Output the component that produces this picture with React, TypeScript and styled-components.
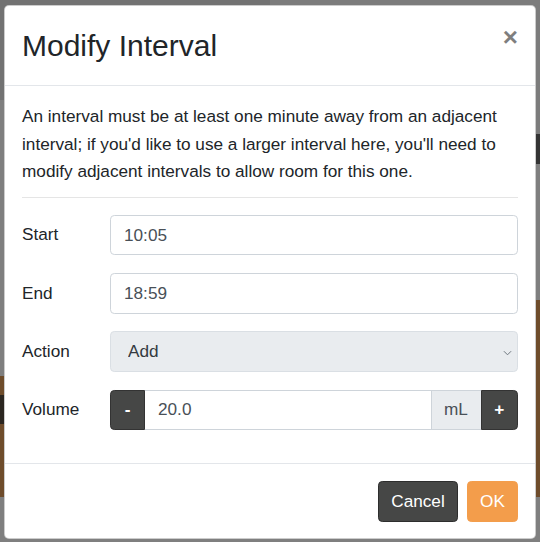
import styled, { createGlobalStyle } from "styled-components";

const GlobalStyle = createGlobalStyle`
  html, body {
    margin: 0;
    padding: 0;
  }
  body {
    min-height: 542px;
    font-family: "Liberation Sans", "Helvetica Neue", Arial, sans-serif;
    color: #212529;
    background:
      linear-gradient(
          to bottom,
          #727272 0 100px,
          #7f7f7f 100px 376px,
          #6e4c2b 376px 395px,
          #2b2620 395px 424px,
          #6e4c2b 424px 497px,
          #7f7f7f 497px
        )
        left top / 50% 100% no-repeat,
      linear-gradient(
          to bottom,
          #7c7c7c 0 134px,
          #343434 134px 164px,
          #7f7f7f 164px 300px,
          #6e4c2b 300px 497px,
          #7f7f7f 497px
        )
        right top / 50% 100% no-repeat;
  }
  * {
    box-sizing: border-box;
  }
`;

const rows = [
  { label: "Start", value: "10:05" },
  { label: "End", value: "18:59" },
];

export default function App() {
  return (
    <>
      <GlobalStyle />
      <Dialog role="dialog" aria-labelledby="modify-interval-title">
        <Header>
          <Title id="modify-interval-title">Modify Interval</Title>
          <CloseButton aria-label="Close">×</CloseButton>
        </Header>
        <Body>
          <Notice>
            An interval must be at least one minute away from an adjacent
            interval; if you'd like to use a larger interval here, you'll need
            to modify adjacent intervals to allow room for this one.
          </Notice>
          <Divider />
          <Form>
            {rows.map((row) => (
              <FormRow key={row.label}>
                <Label>{row.label}</Label>
                <TextInput defaultValue={row.value} />
              </FormRow>
            ))}
            <FormRow>
              <Label>Action</Label>
              <SelectWrap>
                <Select defaultValue="add">
                  <option value="add">Add</option>
                  <option value="remove">Remove</option>
                </Select>
                <Chevron viewBox="0 0 10 6" aria-hidden="true">
                  <path d="M1 1l4 4 4-4" />
                </Chevron>
              </SelectWrap>
            </FormRow>
            <FormRow>
              <Label>Volume</Label>
              <InputGroup>
                <StepButton $side="left">-</StepButton>
                <GroupInput defaultValue="20.0" />
                <Addon>mL</Addon>
                <StepButton $side="right">+</StepButton>
              </InputGroup>
            </FormRow>
          </Form>
        </Body>
        <Footer>
          <Button $variant="dark">Cancel</Button>
          <Button $variant="orange">OK</Button>
        </Footer>
      </Dialog>
    </>
  );
}

const Dialog = styled.div`
  margin: 5px 4px 0;
  background: #fff;
  border: 1px solid rgba(0, 0, 0, 0.2);
  border-radius: 5px;
  display: flex;
  flex-direction: column;
  overflow: hidden;
`;

const Header = styled.div`
  display: flex;
  align-items: flex-start;
  justify-content: space-between;
  padding: 17px 17px 17px;
  border-bottom: 1px solid #e3e6ea;
`;

const Title = styled.h3`
  margin: 0;
  font-size: 30px;
  font-weight: 400;
  line-height: 45px;
  color: #212529;
`;

const CloseButton = styled.button`
  background: transparent;
  border: 0;
  padding: 0;
  margin: 1px 0 0;
  font-family: inherit;
  font-size: 26px;
  font-weight: 700;
  line-height: 1;
  color: #000;
  opacity: 0.5;
  text-shadow: 0 1px 0 #fff;
  cursor: pointer;
`;

const Body = styled.div`
  padding: 17px 17px 15px;
`;

const Notice = styled.p`
  margin: 0;
  font-size: 17.2px;
  line-height: 27.6px;
`;

const Divider = styled.hr`
  margin: 11px 0 17px;
  border: 0;
  border-top: 1px solid rgba(0, 0, 0, 0.1);
`;

const Form = styled.div`
  display: flex;
  flex-direction: column;
  gap: 17.6px;
  padding-bottom: 17.6px;
`;

const FormRow = styled.div`
  display: grid;
  grid-template-columns: 88px 1fr;
  align-items: center;
`;

const Label = styled.label`
  font-size: 17.2px;
  line-height: 25.8px;
`;

const controlBase = `
  height: 40.7px;
  font-family: inherit;
  font-size: 17.2px;
  line-height: 25.8px;
  color: #495057;
  border: 1px solid #ced4da;
  outline: none;
`;

const TextInput = styled.input`
  ${controlBase}
  width: 100%;
  padding: 6px 13px;
  background: #fff;
  border-radius: 4.3px;
`;

const SelectWrap = styled.div`
  position: relative;
`;

const Select = styled.select`
  ${controlBase}
  width: 100%;
  padding: 6px 30px 6px 17px;
  appearance: none;
  background: #e9ecef;
  border-color: #dadfe4;
  border-radius: 4.3px;
  color: #343a40;
`;

const Chevron = styled.svg`
  position: absolute;
  right: 6px;
  top: 50%;
  width: 9px;
  height: 6px;
  margin-top: -2px;
  fill: none;
  stroke: #6c757d;
  stroke-width: 1.1;
  pointer-events: none;
`;

const InputGroup = styled.div`
  display: flex;
  align-items: stretch;
  height: 40.7px;
`;

const StepButton = styled.button<{ $side: "left" | "right" }>`
  width: ${({ $side }) => ($side === "left" ? "35px" : "37.5px")};
  padding: 0;
  font-family: inherit;
  font-size: 17.2px;
  font-weight: 700;
  color: #fff;
  background: #464746;
  border: 1px solid #333;
  border-radius: ${({ $side }) => ($side === "left" ? "4.3px 0 0 4.3px" : "0 4.3px 4.3px 0")};
  cursor: pointer;
`;

const GroupInput = styled.input`
  ${controlBase}
  flex: 1;
  min-width: 0;
  padding: 6px 13px;
  background: #fff;
  border-left: 0;
  border-right: 0;
  border-radius: 0;
`;

const Addon = styled.span`
  display: flex;
  align-items: center;
  justify-content: center;
  width: 50px;
  font-size: 17.2px;
  color: #495057;
  background: #e9ecef;
  border: 1px solid #ced4da;
  border-right: 0;
`;

const Footer = styled.div`
  display: flex;
  justify-content: flex-end;
  gap: 9px;
  padding: 17.5px 17px 16px;
  border-top: 1px solid #e3e6ea;
`;

const Button = styled.button<{ $variant: "dark" | "orange" }>`
  width: ${({ $variant }) => ($variant === "dark" ? "80px" : "51px")};
  height: 40.7px;
  padding: 0;
  font-family: inherit;
  font-size: 17.2px;
  line-height: 25.8px;
  color: #fff;
  background: ${({ $variant }) => ($variant === "dark" ? "#464746" : "#f39d4b")};
  border: 1px solid ${({ $variant }) => ($variant === "dark" ? "#2d2d2d" : "#f39d4b")};
  border-radius: 4.3px;
  cursor: pointer;
`;
